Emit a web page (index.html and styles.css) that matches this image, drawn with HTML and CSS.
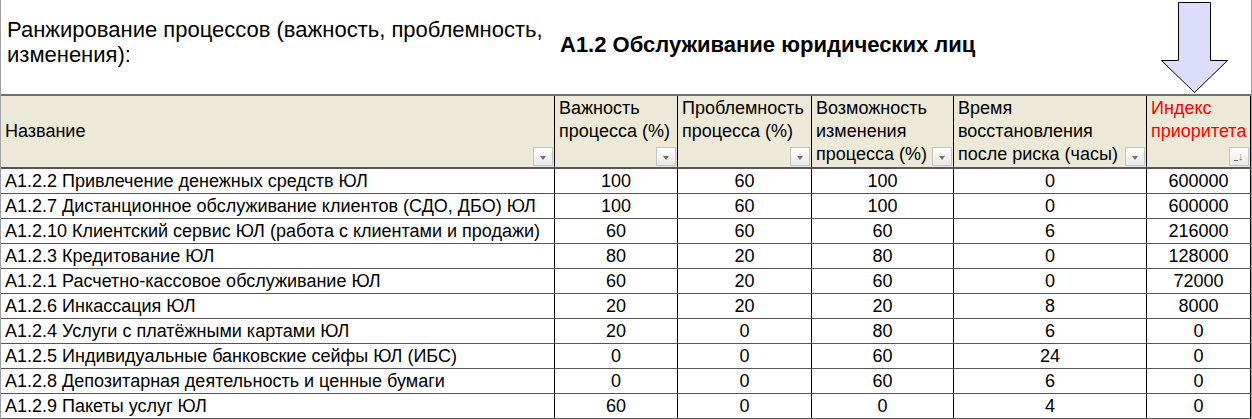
FILE: index.html
```html
<!DOCTYPE html>
<html lang="ru">
<head>
<meta charset="utf-8">
<link rel="stylesheet" href="styles.css">
</head>
<body>
<div class="sheet">
  <div class="top">
    <div class="caption">Ранжирование процессов (важность, проблемность, изменения):</div>
    <div class="title">А1.2 Обслуживание юридических лиц</div>
    <svg class="arrow" width="70" height="96" viewBox="0 0 70 96">
      <path d="M17.5 2.5 H49.5 V60.5 H66.5 L33.5 92.5 L0.5 60.5 H17.5 Z" fill="#dcdcfb" stroke="#000" stroke-width="1"/>
    </svg>
  </div>
  <table class="grid">
    <colgroup>
      <col class="c1"><col class="c2"><col class="c3"><col class="c4"><col class="c5"><col class="c6">
    </colgroup>
    <thead>
      <tr>
        <th class="name"><span>Название</span><i class="dd"></i></th>
        <th><span>Важность процесса (%)</span><i class="dd"></i></th>
        <th><span>Проблемность процесса (%)</span><i class="dd"></i></th>
        <th><span>Возможность изменения процесса (%)</span><i class="dd"></i></th>
        <th><span>Время восстановления после риска (часы)</span><i class="dd"></i></th>
        <th class="red"><span>Индекс приоритета</span><i class="dd sort"><b>↓</b></i></th>
      </tr>
    </thead>
    <tbody>
      <tr><td>А1.2.2 Привлечение денежных средств ЮЛ</td><td>100</td><td>60</td><td>100</td><td>0</td><td>600000</td></tr>
      <tr><td>А1.2.7 Дистанционное обслуживание клиентов (СДО, ДБО) ЮЛ</td><td>100</td><td>60</td><td>100</td><td>0</td><td>600000</td></tr>
      <tr><td>А1.2.10 Клиентский сервис ЮЛ (работа с клиентами и продажи)</td><td>60</td><td>60</td><td>60</td><td>6</td><td>216000</td></tr>
      <tr><td>А1.2.3 Кредитование ЮЛ</td><td>80</td><td>20</td><td>80</td><td>0</td><td>128000</td></tr>
      <tr><td>А1.2.1 Расчетно-кассовое обслуживание ЮЛ</td><td>60</td><td>20</td><td>60</td><td>0</td><td>72000</td></tr>
      <tr><td>А1.2.6 Инкассация ЮЛ</td><td>20</td><td>20</td><td>20</td><td>8</td><td>8000</td></tr>
      <tr><td>А1.2.4 Услуги с платёжными картами ЮЛ</td><td>20</td><td>0</td><td>80</td><td>6</td><td>0</td></tr>
      <tr><td>А1.2.5 Индивидуальные банковские сейфы ЮЛ (ИБС)</td><td>0</td><td>0</td><td>60</td><td>24</td><td>0</td></tr>
      <tr><td>А1.2.8 Депозитарная деятельность и ценные бумаги</td><td>0</td><td>0</td><td>60</td><td>6</td><td>0</td></tr>
      <tr><td>А1.2.9 Пакеты услуг ЮЛ</td><td>60</td><td>0</td><td>0</td><td>4</td><td>0</td></tr>
    </tbody>
  </table>
</div>
</body>
</html>
```

FILE: styles.css
```css
html, body {
  margin: 0;
  padding: 0;
  background: #fff;
}
body {
  font-family: "Liberation Sans", Arial, sans-serif;
  color: #000;
}
.sheet {
  width: 1250px;
  border-left: 1px solid #a0a0a0;
  border-right: 1px solid #a0a0a0;
  height: 419px;
  overflow: hidden;
}
.top {
  position: relative;
  height: 94px;
  display: flex;
  align-items: flex-start;
}
.caption {
  width: 548px;
  padding: 17px 0 0 6px;
  font-size: 22px;
  line-height: 25px;
}
.title {
  padding: 32px 0 0 5px;
  font-size: 22px;
  font-weight: bold;
  line-height: 26px;
}
.arrow {
  position: absolute;
  left: 1160px;
  top: 0;
}
.grid {
  border-collapse: collapse;
  table-layout: fixed;
  width: 1250px;
  margin-left: -1px;
  font-size: 18px;
}
.c1 { width: 554px; }
.c2 { width: 123px; }
.c3 { width: 134px; }
.c4 { width: 142px; }
.c5 { width: 193px; }
.c6 { width: 104px; }
.grid th {
  position: relative;
  background: #ece9d8;
  font-weight: normal;
  text-align: left;
  vertical-align: top;
  height: 70px;
  padding: 1px 2px 0 4px;
  line-height: 23px;
  border: 1px solid #000;
  border-top: 2px solid #707070;
  border-bottom: 2px solid #555;
}
.grid th.name {
  vertical-align: middle;
  padding-top: 0;
}
.grid th.red {
  color: #ff0000;
}
.dd {
  position: absolute;
  right: 1px;
  bottom: 1px;
  width: 20px;
  height: 19px;
  box-sizing: border-box;
  border: 1px solid #c4c4c4;
  background: linear-gradient(#ffffff, #e8e8e8);
}
.dd::after {
  content: "";
  position: absolute;
  left: 6px;
  top: 8px;
  border-left: 3px solid transparent;
  border-right: 3px solid transparent;
  border-top: 4px solid #6e6e6e;
}
.dd.sort::after {
  left: 4px;
  top: 12px;
  border: none;
  width: 4px;
  height: 1px;
  background: #6e6e6e;
}
.dd.sort b {
  position: absolute;
  left: 8px;
  top: 1px;
  font-size: 11px;
  font-weight: normal;
  line-height: 14px;
  color: #6e6e6e;
}
.grid td {
  padding: 1px 3px 0;
  line-height: 23px;
  border: 1px solid #000;
  border-top: 1px solid #555;
  border-bottom: 1px solid #555;
  text-align: center;
  white-space: nowrap;
  overflow: hidden;
}
.grid td:first-child {
  text-align: left;
  padding-left: 4px;
}
```
